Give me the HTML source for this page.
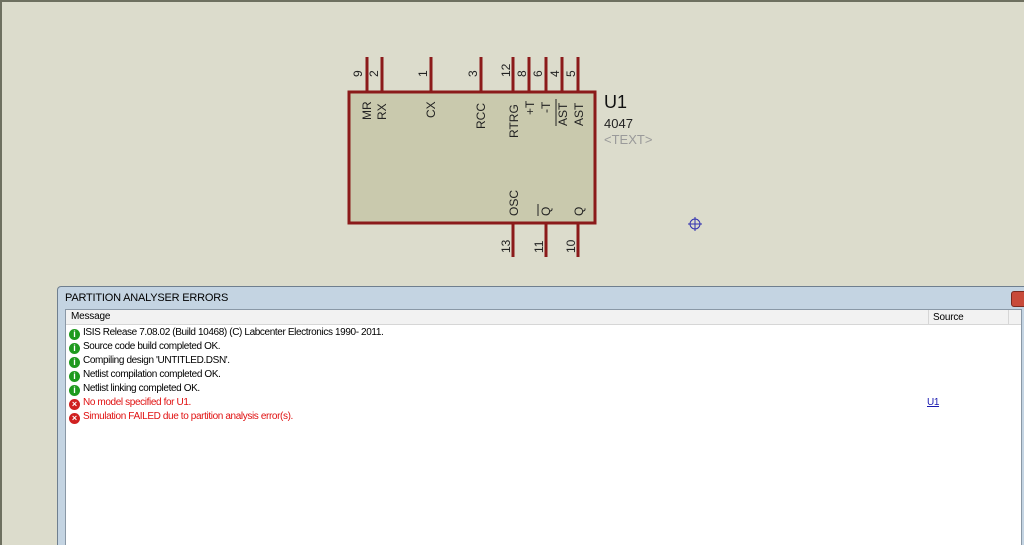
<!DOCTYPE html>
<html><head><meta charset="utf-8"><style>
html,body{margin:0;padding:0;width:1024px;height:545px;overflow:hidden;background:#dcdccc;font-family:"Liberation Sans",sans-serif;position:relative;}
.frame{position:absolute;left:0;top:0;width:1024px;height:545px;border-top:2px solid #6e7060;border-left:2px solid #6e7060;box-sizing:border-box;}
svg text{font-family:"Liberation Sans",sans-serif;}
.win{position:absolute;left:57px;top:286px;width:980px;height:259px;background:#c4d4e2;border:1px solid #6f7f8f;border-bottom:none;border-radius:4px 4px 0 0;overflow:hidden;}
.title{position:absolute;left:7px;top:5px;font-size:11px;color:#000;letter-spacing:-0.2px;}
.close{position:absolute;left:953px;top:4px;width:14px;height:14px;background:#c84a3a;border:1px solid #7a2a20;border-radius:3px;}
.list{position:absolute;left:7px;top:22px;width:955px;height:240px;background:#fff;border:1px solid #8a98a6;}
.hdr{position:absolute;left:0;top:0;height:14px;width:955px;background:#f2f2f2;border-bottom:1px solid #d6d6d6;font-size:10px;letter-spacing:-0.2px;}
.hdr span{position:absolute;top:1px;}
.row{position:absolute;left:3px;height:14px;font-size:10px;line-height:14px;white-space:nowrap;letter-spacing:-0.38px;}
.ic{display:inline-block;width:11px;height:11px;border-radius:50%;vertical-align:-2px;margin-right:3px;color:#fff;font-size:9px;font-weight:bold;text-align:center;line-height:11px;letter-spacing:0;}
.ok{background:#1e9a1e;}
.er{background:#d02020;}
.red{color:#e01010;}
</style></head><body>
<div class="frame"></div>
<svg width="1024" height="545" style="position:absolute;left:0;top:0">
<g stroke="#8b1a1a" stroke-width="3">
<line x1="367" y1="57" x2="367" y2="91"/><line x1="382" y1="57" x2="382" y2="91"/>
<line x1="431" y1="57" x2="431" y2="91"/><line x1="481" y1="57" x2="481" y2="91"/>
<line x1="513" y1="57" x2="513" y2="91"/><line x1="529" y1="57" x2="529" y2="91"/>
<line x1="546" y1="57" x2="546" y2="91"/><line x1="562" y1="57" x2="562" y2="91"/>
<line x1="578" y1="57" x2="578" y2="91"/>
<line x1="513" y1="223" x2="513" y2="257"/><line x1="546" y1="223" x2="546" y2="257"/>
<line x1="578" y1="223" x2="578" y2="257"/>
</g>
<rect x="349" y="92" width="246" height="131" fill="#c9c9ad" stroke="#8b1a1a" stroke-width="3"/>
<g font-size="12" fill="#222">
<text transform="translate(362,77) rotate(-90)">9</text>
<text transform="translate(378,77) rotate(-90)">2</text>
<text transform="translate(427,77) rotate(-90)">1</text>
<text transform="translate(477,77) rotate(-90)">3</text>
<text transform="translate(510,77) rotate(-90)">12</text>
<text transform="translate(526,77) rotate(-90)">8</text>
<text transform="translate(542,77) rotate(-90)">6</text>
<text transform="translate(559,77) rotate(-90)">4</text>
<text transform="translate(575,77) rotate(-90)">5</text>
<text transform="translate(510,253) rotate(-90)">13</text>
<text transform="translate(543,253) rotate(-90)">11</text>
<text transform="translate(575,253) rotate(-90)">10</text>
<text transform="translate(371,120) rotate(-90)">MR</text>
<text transform="translate(386,120) rotate(-90)">RX</text>
<text transform="translate(435,118) rotate(-90)">CX</text>
<text transform="translate(485,129) rotate(-90)">RCC</text>
<text transform="translate(518,138) rotate(-90)">RTRG</text>
<text transform="translate(534,115) rotate(-90)">+T</text>
<text transform="translate(550,113) rotate(-90)">-T</text>
<text transform="translate(567,126) rotate(-90)">AST</text>
<text transform="translate(583,126) rotate(-90)">AST</text>
<text transform="translate(518,216) rotate(-90)">OSC</text>
<text transform="translate(550,216) rotate(-90)">Q</text>
<text transform="translate(583,216) rotate(-90)">Q</text>
</g>
<line x1="556" y1="99" x2="556" y2="126" stroke="#222" stroke-width="1"/>
<line x1="538" y1="204" x2="538" y2="216" stroke="#222" stroke-width="1"/>
<text x="604" y="108" font-size="18" fill="#111">U1</text>
<text x="604" y="128" font-size="13" fill="#222">4047</text>
<text x="604" y="144" font-size="13" fill="#9a9a9a">&lt;TEXT&gt;</text>
<g stroke="#3030b0" stroke-width="1" fill="none">
<circle cx="695" cy="224" r="5"/>
<line x1="688" y1="224" x2="702" y2="224"/><line x1="695" y1="217" x2="695" y2="231"/>
</g>
</svg>
<div class="win">
<div class="title">PARTITION ANALYSER ERRORS</div>
<div class="close"></div>
<div class="list">
<div class="hdr"><span style="left:5px">Message</span><span style="left:862px;border-left:1px solid #d6d6d6;padding-left:4px;top:0;height:14px;line-height:15px">Source</span><span style="left:942px;border-left:1px solid #d6d6d6;height:14px;top:0"></span></div>
<div class="row" style="top:16px"><span class="ic ok">i</span>ISIS Release 7.08.02 (Build 10468) (C) Labcenter Electronics 1990- 2011.</div>
<div class="row" style="top:30px"><span class="ic ok">i</span>Source code build completed OK.</div>
<div class="row" style="top:44px"><span class="ic ok">i</span>Compiling design 'UNTITLED.DSN'.</div>
<div class="row" style="top:58px"><span class="ic ok">i</span>Netlist compilation completed OK.</div>
<div class="row" style="top:72px"><span class="ic ok">i</span>Netlist linking completed OK.</div>
<div class="row red" style="top:86px"><span class="ic er">×</span>No model specified for U1.</div>
<div class="row red" style="top:100px"><span class="ic er">×</span>Simulation FAILED due to partition analysis error(s).</div>
<div class="row" style="top:86px;left:861px;color:#1a1ab0;text-decoration:underline">U1</div>
</div>
</div>
</body></html>
